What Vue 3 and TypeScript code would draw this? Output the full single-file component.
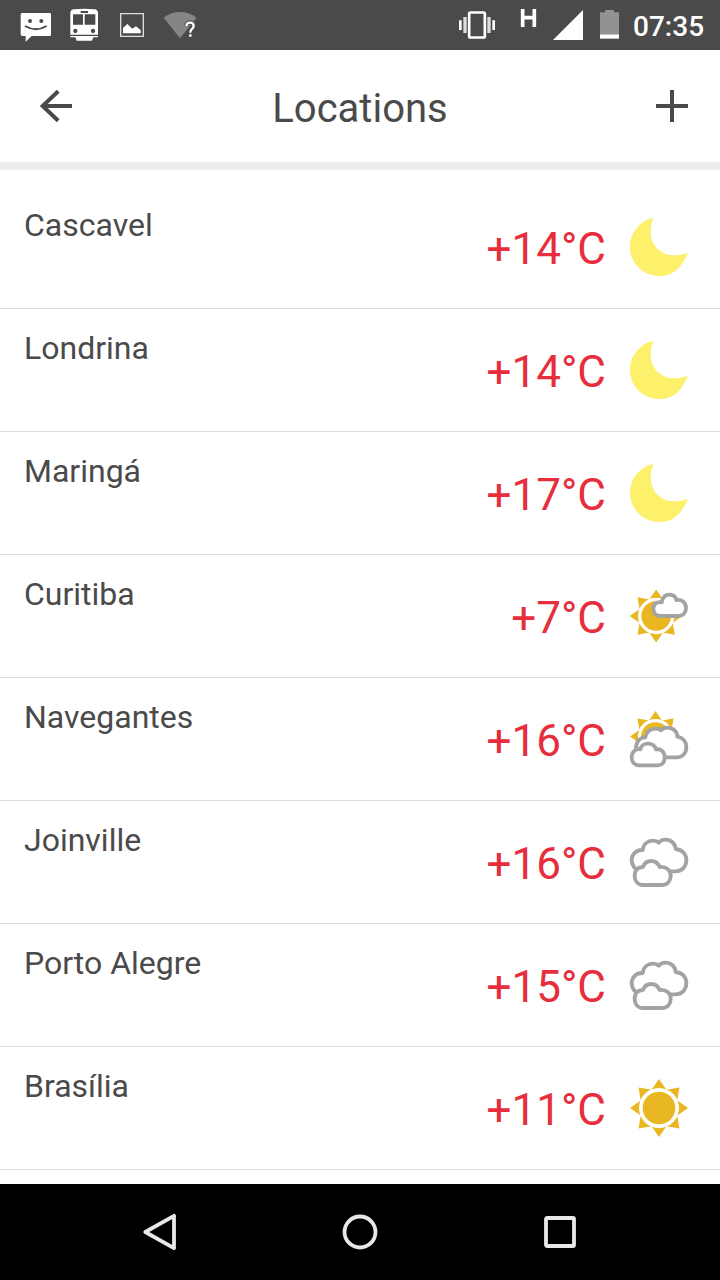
<script setup lang="ts">
type Weather = 'moon' | 'sun' | 'fair' | 'partly' | 'cloudy'

interface Location {
  name: string
  temperature: number
  weather: Weather
}

const locations: Location[] = [
  { name: 'Cascavel', temperature: 14, weather: 'moon' },
  { name: 'Londrina', temperature: 14, weather: 'moon' },
  { name: 'Maringá', temperature: 17, weather: 'moon' },
  { name: 'Curitiba', temperature: 7, weather: 'fair' },
  { name: 'Navegantes', temperature: 16, weather: 'partly' },
  { name: 'Joinville', temperature: 16, weather: 'cloudy' },
  { name: 'Porto Alegre', temperature: 15, weather: 'cloudy' },
  { name: 'Brasília', temperature: 11, weather: 'sun' },
]

const viewBoxes: Record<Weather, string> = {
  moon: '51 45 192 192',
  sun: '51 48 192 192',
  fair: '51 42 192 192',
  partly: '51 36 192 192',
  cloudy: '51 45 192 192',
}

const sunTransforms: Partial<Record<Weather, string>> = {
  sun: 'translate(147 144)',
  fair: 'translate(138.5 138) scale(.91)',
  partly: 'translate(136.5 124.5) scale(.88)',
}

const rayAngles = [0, 45, 90, 135, 180, 225, 270, 315]
</script>

<template>
  <div class="screen">
    <header class="status">
      <svg class="message" viewBox="54 0 108 150">
        <path fill="#fff" d="M67 39H149Q153 39 153 43V104Q153 108 149 108H95L77 125V108H67Q62 108 62 103V43Q62 39 67 39Z" />
        <circle cx="90" cy="63" r="6" fill="#4a4a4a" />
        <circle cx="124" cy="63" r="6" fill="#4a4a4a" />
        <path d="M75 78Q107 97 140 78" fill="none" stroke="#4a4a4a" stroke-width="6" />
      </svg>
      <svg class="bus" viewBox="204 0 96 150">
        <path fill="#fff" d="M211 40Q211 28 223 28Q253 25 283 28Q294 29 294 40V104H211ZM211 108H294V112H280L276 122H230L226 112H211Z" />
        <g fill="#4a4a4a">
          <path d="M242 33H264V39H242ZM219 43H249V74H219ZM254 43H286V74H254Z" />
          <circle cx="226" cy="93" r="6.5" />
          <circle cx="279" cy="93" r="6.5" />
        </g>
      </svg>
      <svg class="picture" viewBox="354 0 84 150">
        <path d="M362 41H430V109H362Z" fill="none" stroke="#ddd" stroke-width="4" />
        <path fill="#fff" d="M369 100V84L382 72L397 86L408 79L422 90V100Z" />
      </svg>
      <svg class="wifi" viewBox="486 0 108 150">
        <path fill="#858585" d="M491 53Q512 36 540 36Q568 36 590 53L540 115Z" />
        <g fill="none" stroke-linejoin="round">
          <path d="M559 78Q560 68 570 68Q581 68 581 78Q581 84 575 88Q571 91 571 98M571 103V110" stroke="#4a4a4a" stroke-width="13" />
          <path d="M559 78Q560 68 570 68Q581 68 581 78Q581 84 575 88Q571 91 571 98M571 103V110" stroke="#fff" stroke-width="7" />
        </g>
      </svg>
      <svg class="vibrate" viewBox="51 0 120 150">
        <rect x="87.5" y="37.5" width="47" height="75" rx="4" fill="none" stroke="#fff" stroke-width="8" />
        <path fill="#fff" d="M57 61H65V90H57ZM157 61H165V90H157Z" />
        <path fill="#ddd" d="M70 51H80V99H70ZM142 51H152V99H142Z" />
      </svg>
      <svg class="network" viewBox="237 0 57 150">
        <path d="M248 27V81M283 27V81M248 53H283" stroke="#fff" stroke-width="11" />
      </svg>
      <svg class="signal" viewBox="333 0 102 150">
        <path d="M429 30V120H339Z" fill="#fff" />
      </svg>
      <svg class="battery" viewBox="474 0 69 150">
        <path d="M480 37H495V30H522V37H537V103H480Z" fill="#929292" />
        <path d="M480 103H537V116H480Z" fill="#fff" />
      </svg>
      <span class="clock">07:35</span>
    </header>

    <nav class="toolbar">
      <svg class="action" viewBox="0 0 32 32">
        <path d="M18.2 1.2L2.7 16L18.2 30.8M2 16H32" />
      </svg>
      <h1>Locations</h1>
      <svg class="action" viewBox="0 0 32 32">
        <path d="M16 0V32M0 16H32" />
      </svg>
    </nav>

    <ul class="list">
      <li v-for="place in locations" :key="place.name">
        <span class="name">{{ place.name }}</span>
        <span class="temp">+{{ place.temperature }}°C</span>
        <svg class="weather" :viewBox="viewBoxes[place.weather]">
          <path
            v-if="place.weather === 'moon'"
            fill="#fdf06b"
            d="M130 53C90 62 60 98 60 141C60 190 100 228 148 228C188 228 212 208 234 158C218 164 208 166 192 166C152 166 122 134 122 95C122 80 125 67 130 53Z"
          />
          <g v-if="sunTransforms[place.weather]" :transform="sunTransforms[place.weather]" fill="#e8b722">
            <path v-for="angle in rayAngles" :key="angle" d="M0-87L23-54H-23Z" :transform="`rotate(${angle})`" />
            <circle r="60" fill="#fff" />
            <circle r="49" />
          </g>
          <g class="cloud">
            <path
              v-if="place.weather === 'fair'"
              d="M151 138C138 138 130 129 130 116C130 103 140 94 155 97C158 82 165 74 177 74C188 74 197 80 199 90C216 87 228 98 228 114C228 129 218 138 205 138Z"
            />
            <template v-if="place.weather === 'partly'">
              <path d="M87 187C80 180 78 170 78 160C78 140 90 127 106 127C110 109 122 101 137 101C145 101 150 103 153 106C158 99 165 98 172 98C189 98 202 109 202 125C219 128 229 140 229 156C229 175 217 187 200 187Z" />
              <path d="M87 211H145C156 211 164 201 164 187C164 171 154 161 138 163C134 151 125 146 114 146C102 146 93 153 91 163C76 160 65 172 65 187C65 202 75 211 87 211Z" />
            </template>
            <template v-if="place.weather === 'cloudy'">
              <path d="M90 170C70 160 65 148 65 136C65 117 80 104 98 105C100 87 113 77 129 77C137 77 142 79 146 83C152 76 159 74 166 74C183 74 196 85 197 102C217 104 229 118 229 136C229 156 215 169 196 169Z" />
              <path d="M99 210H155C172 210 182 198 182 183C182 166 170 154 149 156C143 142 134 138 124 138C112 138 103 144 99 156C84 156 74 166 74 183C74 199 84 210 99 210Z" />
            </template>
          </g>
        </svg>
      </li>
    </ul>

    <footer class="softkeys">
      <svg viewBox="0 0 40 40"><path d="M5.3 20L34 3.8V36.2Z" /></svg>
      <svg viewBox="0 0 40 40"><circle cx="20" cy="20" r="15.5" /></svg>
      <svg viewBox="0 0 40 40"><rect x="6" y="6" width="28" height="28" rx="1" /></svg>
    </footer>
  </div>
</template>

<style scoped>
.screen {
  display: flex;
  flex-direction: column;
  width: 720px;
  height: 1280px;
  overflow: hidden;
  background: #fff;
  color: #4a4a4a;
  font-family: Roboto, sans-serif;
}
svg {
  display: block;
  flex: none;
}
.status {
  display: flex;
  flex: none;
  height: 50px;
  padding: 0 16px 0 18px;
  background: #4a4a4a;
}
.status svg { height: 50px; }
.message { width: 36px; }
.bus { width: 32px; margin-left: 14px; }
.picture { width: 28px; margin-left: 18px; }
.wifi { width: 36px; margin-left: 16px; }
.vibrate { width: 40px; margin-left: auto; }
.network { width: 19px; margin-left: 22px; }
.signal { width: 34px; margin-left: 13px; }
.battery { width: 23px; margin-left: 13px; }
.clock {
  width: 71px;
  margin-left: 12px;
  color: #fff;
  font-size: 28px;
  font-weight: 500;
  line-height: 53px;
  white-space: nowrap;
}
.toolbar {
  display: flex;
  flex: none;
  align-items: center;
  justify-content: space-between;
  height: 120px;
  box-sizing: border-box;
  padding: 0 32px 0 40px;
  border-bottom: 8px solid #ededed;
}
.action {
  width: 32px;
  height: 32px;
  fill: none;
  stroke: #4a4a4a;
  stroke-width: 4;
}
h1 {
  margin: 5px 8px 0 0;
  font-size: 40px;
  font-weight: 400;
}
.list {
  flex: 1;
  margin: 0;
  padding: 16px 0 0;
  list-style: none;
}
li {
  display: flex;
  height: 123px;
  box-sizing: border-box;
  padding: 0 29px 0 24px;
  border-bottom: 1px solid #dedede;
}
.name {
  flex: 1;
  padding-top: 20px;
  font-size: 32px;
  line-height: 38px;
}
.temp {
  padding-top: 37px;
  color: #e62e3d;
  font-size: 44px;
  line-height: 53px;
}
.weather {
  width: 64px;
  height: 64px;
  margin: 29px 0 0 21px;
}
.cloud {
  fill: #fff;
  stroke: #a3a3a3;
  stroke-width: 11.5;
  stroke-linejoin: round;
}
.softkeys {
  display: flex;
  flex: none;
  align-items: center;
  justify-content: space-between;
  height: 96px;
  box-sizing: border-box;
  padding: 0 140px;
  background: #000;
}
.softkeys svg {
  width: 40px;
  height: 40px;
  fill: none;
  stroke: #e8e8e8;
  stroke-width: 3.8;
  stroke-linejoin: round;
}
</style>
